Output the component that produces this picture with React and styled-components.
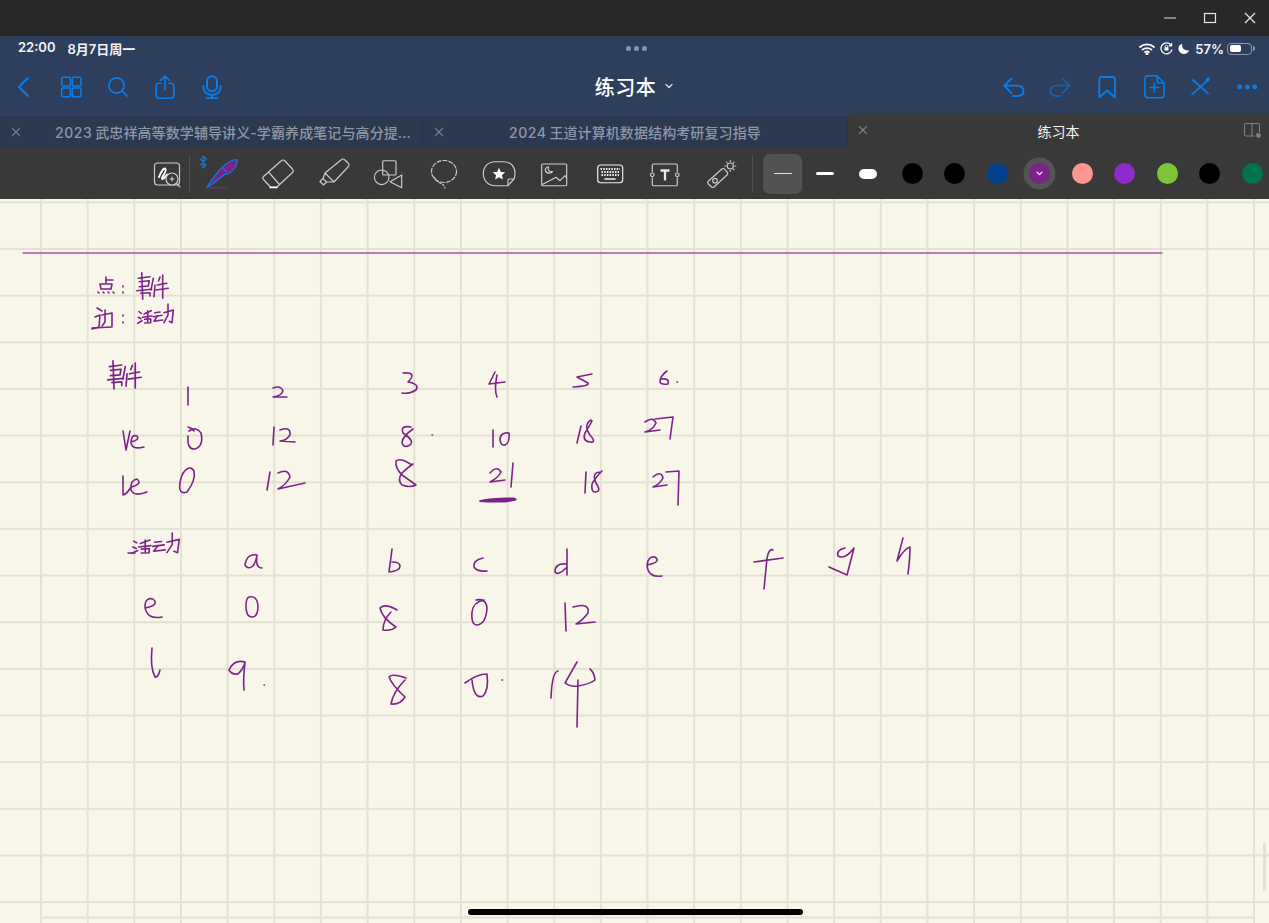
import styled, { createGlobalStyle } from 'styled-components';

const GlobalStyle = createGlobalStyle`
  html, body { margin: 0; padding: 0; background: #282828; }
  body { font-family: Inter, "Noto Sans CJK SC", sans-serif; overflow: hidden; }
`;

const blue = '#0a7ee8';
const ink = '#7c2389';

const Page = styled.div`
  width: 1269px;
  height: 923px;
  display: flex;
  flex-direction: column;
  overflow: hidden;
`;

const WindowBar = styled.div`
  height: 36px;
  flex: none;
  background: #282828;
  display: flex;
  justify-content: flex-end;
  align-items: center;
  margin-right: -1px;
`;

const WindowBtn = styled.button`
  width: 40px;
  height: 36px;
  padding: 0;
  border: 0;
  background: none;
  display: flex;
  align-items: center;
  justify-content: center;
`;

const Header = styled.header`
  flex: none;
  background: #2e3f5d;
  padding-bottom: 2px;
`;

const StatusBar = styled.div`
  height: 24px;
  box-sizing: border-box;
  padding: 1px 14px 0 18px;
  display: grid;
  grid-template-columns: 1fr auto 1fr;
  align-items: center;
  color: #f2f4f8;
  font-size: 13px;
  font-weight: 600;
`;

const Clock = styled.div`
  display: flex;
  gap: 12px;
`;

const Dots = styled.div`
  display: flex;
  gap: 3px;
  span {
    width: 5px;
    height: 5px;
    border-radius: 50%;
    background: #8595b3;
  }
`;

const Status = styled.div`
  display: flex;
  justify-content: flex-end;
  align-items: center;
  gap: 5px;
`;

const Battery = styled.div`
  width: 25px;
  height: 12px;
  box-sizing: border-box;
  border: 1px solid #8b97ac;
  border-radius: 4px;
  padding: 1.5px;
  margin-right: 3px;
  margin-left: -2px;
  position: relative;
  &::before {
    content: '';
    display: block;
    height: 100%;
    width: 56%;
    border-radius: 2px;
    background: #fff;
  }
  &::after {
    content: '';
    position: absolute;
    right: -4px;
    top: 2.5px;
    width: 2px;
    height: 5px;
    border-radius: 0 2px 2px 0;
    background: #8b97ac;
  }
`;

const NavBar = styled.nav`
  height: 54px;
  display: grid;
  grid-template-columns: 1fr auto 1fr;
  align-items: center;
`;

const NavGroup = styled.div`
  display: flex;
  justify-content: ${(p) => (p.$end ? 'flex-end' : 'flex-start')};
  margin-right: ${(p) => (p.$end ? -1 : 0)}px;
`;

const NavBtn = styled.button`
  width: ${(p) => p.$w || 47}px;
  height: 44px;
  padding: 0;
  border: 0;
  background: none;
  display: flex;
  align-items: center;
  justify-content: center;
`;

const NavSvg = styled.svg.attrs({
  width: 24,
  height: 24,
  viewBox: '0 0 24 24',
  fill: 'none',
  strokeLinecap: 'round',
  strokeLinejoin: 'round',
})`
  stroke: ${blue};
  stroke-width: ${(p) => p.$sw || 1.8};
  opacity: ${(p) => (p.$dim ? 0.5 : 1)};
`;

const Title = styled.div`
  display: flex;
  align-items: center;
  gap: 9px;
  color: #fff;
  font-size: 20px;
  font-weight: 500;
  letter-spacing: 0.5px;
  margin: -2px 1px 0 0;
`;

const TabRow = styled.div`
  height: 32px;
  flex: none;
  display: flex;
  background: #2a3950;
`;

const Tab = styled.div`
  width: ${(p) => p.$w}px;
  flex: none;
  box-sizing: border-box;
  height: ${(p) => (p.$active ? 35 : 32)}px;
  margin-top: ${(p) => (p.$active ? -3 : 0)}px;
  padding: 0 13px 0 ${(p) => p.$pad || 13}px;
  display: flex;
  align-items: center;
  justify-content: center;
  position: relative;
  border-right: ${(p) => (p.$active ? 0 : '1px solid #26344a')};
  border-radius: ${(p) => (p.$active ? '5px 0 0 0' : 0)};
  background: ${(p) => (p.$active ? '#393939' : 'transparent')};
  color: ${(p) => (p.$active ? '#f4f4f4' : '#8e97a6')};
  font-size: 14px;
  font-weight: ${(p) => (p.$active ? 400 : 500)};
  letter-spacing: ${(p) => (p.$active ? 0 : 0.1)}px;
  white-space: nowrap;
`;

const TabNum = styled.span`
  letter-spacing: 0.5px;
  margin-right: 3px;
`;

const TabClose = styled.svg.attrs({ width: 10, height: 10, viewBox: '0 0 10 10' })`
  position: absolute;
  left: ${(p) => (p.$active ? 10 : 11)}px;
  top: ${(p) => (p.$active ? 12 : 11)}px;
  stroke: ${(p) => (p.$active ? '#8a8a8a' : '#7f8998')};
  stroke-width: 1.1;
  fill: none;
`;

const SplitIcon = styled.svg.attrs({ width: 18, height: 16, viewBox: '0 0 18 16' })`
  position: absolute;
  right: 7px;
  top: 10px;
  fill: none;
  stroke: #818181;
  stroke-width: 1.1;
`;

const Toolbar = styled.div`
  height: 51px;
  flex: none;
  background: #393939;
  display: flex;
  align-items: center;
  padding-left: 147px;
  overflow: hidden;
`;

const ToolBtn = styled.button`
  width: ${(p) => p.$w || 55.4}px;
  height: 44px;
  flex: none;
  padding: 0;
  margin-right: ${(p) => p.$mr || 0}px;
  border: 0;
  background: none;
  display: flex;
  align-items: center;
  justify-content: center;
`;

const ToolSvg = styled.svg.attrs({
  width: 44,
  height: 44,
  viewBox: '0 0 44 44',
  fill: 'none',
  strokeLinecap: 'round',
  strokeLinejoin: 'round',
})`
  flex: none;
  stroke: #cdcdcd;
  stroke-width: 1.15;
`;

const ToolDivider = styled.div`
  width: 1px;
  height: 38px;
  flex: none;
  background: #4f4f4f;
  margin: ${(p) => p.$m};
`;

const WidthBtn = styled.div`
  width: 42.5px;
  height: 40px;
  flex: none;
  display: flex;
  align-items: center;
  justify-content: center;
  position: relative;
  &::before {
    content: '';
    position: absolute;
    left: 1.75px;
    right: 1.75px;
    top: 0;
    bottom: 0;
    border-radius: 7px;
    background: ${(p) => (p.$active ? '#525252' : 'transparent')};
  }
  &::after {
    content: '';
    position: relative;
    width: 18px;
    height: ${(p) => p.$h}px;
    border-radius: 5px;
    background: ${(p) => (p.$active ? '#e4e4e4' : '#fff')};
  }
`;

const SwatchRow = styled.div`
  display: flex;
  flex: none;
  margin-left: 2px;
`;

const Swatch = styled.div`
  width: 42.5px;
  height: 40px;
  flex: none;
  display: flex;
  align-items: center;
  justify-content: center;
`;

const Dot = styled.div`
  width: 21px;
  height: 21px;
  border-radius: 50%;
  flex: none;
  background: ${(p) => p.$color};
  display: flex;
  align-items: center;
  justify-content: center;
  box-shadow: ${(p) => (p.$active ? '0 0 0 5.5px #555' : 'none')};
`;

const Sheet = styled.main`
  flex: 1;
  position: relative;
  background-color: #f8f6e9;
  background-image:
    linear-gradient(to right, #e3e1d4 1.6px, transparent 1.6px),
    linear-gradient(to bottom, #e3e1d4 1.7px, transparent 1.7px);
  background-size: 46.667px 46.667px;
  background-position: 40px 2.3px;
`;

const InkLayer = styled.svg.attrs({
  viewBox: '0 199 1269 724',
  width: 1269,
  height: 724,
  fill: 'none',
  strokeLinecap: 'round',
  strokeLinejoin: 'round',
})`
  position: absolute;
  inset: 0;
  stroke: ${ink};
  stroke-width: 1.6;
`;

const HScroll = styled.div`
  position: absolute;
  left: 40px;
  width: 1213px;
  bottom: 4px;
  height: 3px;
  background: #e3e1d6;
  opacity: 0.8;
`;

const VScroll = styled.div`
  position: absolute;
  right: 3px;
  top: 644px;
  width: 3px;
  height: 48px;
  background: #e3e1d6;
`;

const HomeBar = styled.div`
  position: absolute;
  left: 468px;
  bottom: 8px;
  width: 335px;
  height: 6px;
  border-radius: 3px;
  background: #000;
`;

const shijian = [
  'M141.7 272.7 L142.7 299.3', 'M138.3 278.3 L150 276.7', 'M139.3 281.7 L149.3 280.7 L148.3 286 L139.3 286.7',
  'M136.7 290.7 L151.7 289.3', 'M140.7 293.3 L150 292.7 L150 296',
  'M153.3 278.3 L151 290', 'M155 285 L154 296.7', 'M157.3 285 L166.7 283.3', 'M156 290 L168.3 288.3',
  'M162.7 275 L162.7 298.3', 'M158.5 281 L160 277',
];

const huodong = [
  'M139 311.7 l2.3 1.6', 'M138.3 317.3 l2.7 1.4', 'M137.7 323.3 l4.3 -2.6', 'M144 314 L151.3 310.7', 'M147.7 310.7 V322',
  'M142.7 317.3 L152 316', 'M144.7 319.3 L150.7 318.7 V322.7 L144.7 323',
  'M154.7 312.7 L160 312', 'M153.3 316.7 L162 315.3', 'M157.3 316 L154 321.3 L162.7 320',
  'M164 312.7 L173.3 310 L172 322.7 L169.3 321.3', 'M168 304 V315 L164 322.7',
];

const inkPaths = [
  // heading labels
  'M106 277 V283', 'M106 280 H113', 'M100 284 H112 L111 289 H101 Z', 'M98 292 l1 1', 'M103 292 l1 1', 'M108 292 l1 1', 'M113 292 l1 1',
  'M123 286 v1', 'M123 292 v1',
  'M97 308 L102 311', 'M95 317 L100 315 L99 327 L92 329', 'M92 328 L112 327', 'M102 315 L112 313 L112 326', 'M105 310 L105 322 L102 326',
  'M123 315 v1', 'M123 322 v1',
  // first table
  'M188 387 L188 405',
  'M273 388 Q281 385 283 391 Q281 396 273 397 L287 397',
  'M403 373 Q418 372 408 382 Q420 384 416 390 Q410 394 402 393',
  'M495 372 L489 384 L505 382 M497 375 Q494 390 497 397',
  'M592 374 L577 377 L588 383 Q590 386 573 387',
  'M667 371 Q660 376 660 382 Q661 385 668 384 Q670 378 661 379', 'M677 382 h.5',
  'M123 431 L126 450 L130 431', 'M131 442 Q140 440 137 436 Q131 434 131 443 Q132 450 144 447',
  'M188 427 Q192 428 194 431 M189 431 Q196 426 201 433 Q204 446 195 449 Q187 450 188 436',
  'M274 427 L273 445', 'M280 430 Q291 426 290 435 Q286 441 280 441 L295 442',
  'M411 427 Q400 425 403 433 Q415 441 410 445 Q403 449 402 442 Q403 436 413 429', 'M432 435 h.5',
  'M493 430 L493 447', 'M509 433 Q500 432 500 440 Q501 446 505 445 Q510 443 509 433',
  'M581 426 L577 443', 'M591 420 Q583 425 590 435 Q597 443 590 442 Q582 441 585 433 Q590 425 592 421',
  'M645 422 Q653 416 656 423 Q653 430 645 432 L660 430', 'M655 419 L673 417 L670 439',
  'M123 476 L123 495 Q127 494 131 487', 'M131 487 Q143 484 137 479 Q130 480 131 490 Q134 497 147 492',
  'M183 473 Q190 464 194 471 Q196 480 187 492 Q178 495 180 483 Q181 476 184 472',
  'M270 472 L267 490', 'M278 473 Q288 468 290 477 Q286 485 278 489 L305 483',
  'M412 465 Q400 457 396 461 Q395 468 402 475 Q412 482 416 485 Q410 488 402 485 Q397 480 402 473 Q407 468 413 464',
  'M490 473 Q497 465 501 472 Q498 478 490 482 L505 480', 'M513 463 L511 487',
  'M586 472 L585 493', 'M601 472 Q591 472 596 483 Q602 492 595 492 Q591 492 592 484 Q595 478 602 471',
  'M653 477 Q661 470 663 478 Q660 484 653 487 L667 485', 'M666 472 L679 471 L678 505',
  // second table
  'M128 553 h7',
  'M257 555 Q247 553 245 565 Q248 570 253 566 Q256 562 257 555 Q255 568 262 568',
  'M392 549 L389 572 Q400 571 400 566 Q400 562 392 562',
  'M483 558 Q473 560 474 567 Q477 572 487 571',
  'M566 564 Q555 563 555 572 Q558 576 566 568 M567 549 L567 575',
  'M647 565 Q662 562 655 557 Q648 556 647 565 Q648 578 662 576',
  'M773 550 Q769 548 767 558 L764 589 M754 562 L783 558',
  'M845 548 Q836 550 838 556 Q845 560 854 548 L847 575 L829 567',
  'M903 538 L897 561 Q905 548 910 547 Q910 558 908 574',
  'M145 608 Q160 605 153 599 Q145 597 145 607 Q147 620 162 617',
  'M249 597 Q257 595 258 606 Q258 617 252 617 Q246 617 246 606 Q246 598 249 597',
  'M397 610 Q385 603 380 608 Q382 618 396 627 Q392 631 383 630 Q383 620 391 612',
  'M476 600 Q486 598 487 608 Q486 624 477 625 Q471 625 472 612 Q473 602 484 600',
  'M565 603 L566 631', 'M573 607 Q590 602 588 613 Q582 621 576 624 L595 622',
  'M152 648 Q150 668 155 677 Q158 678 160 670',
  'M245 662 Q234 659 229 670 Q232 675 238 674 Q244 668 245 662 Q243 680 244 690', 'M264 685 h.5',
  'M406 678 Q392 673 389 677 Q392 685 405 697 Q400 705 391 704 Q393 692 405 680',
  'M465 683 Q477 674 487 674 Q489 690 483 696 Q474 700 472 680', 'M502 680 h.5',
  'M558 671 Q552 672 551 698', 'M577 662 L565 683 Q570 687 578 686 Q590 684 595 680 Q594 672 590 669', 'M578 680 L577 727',
];

const Ink = () => (
  <InkLayer aria-hidden="true">
    <path d="M23 253 H1162" stroke="#a94fa9" strokeWidth="1.3" />
    {shijian.map((d) => <path key={d} d={d} />)}
    <g transform="translate(108 360) scale(1.06) translate(-137 -272)">
      {shijian.map((d) => <path key={d} d={d} />)}
    </g>
    {huodong.map((d) => <path key={d} d={d} />)}
    <g transform="translate(131 532) scale(1.33 1.05) translate(-137 -303)">
      {huodong.map((d) => <path key={d} d={d} vectorEffect="non-scaling-stroke" />)}
    </g>
    {inkPaths.map((d) => <path key={d} d={d} />)}
    <path d="M480 501 Q492 498 514 498.5 Q520 500 505 501.5 Q490 502 480 501 Z" fill={ink} strokeWidth="1.8" />
  </InkLayer>
);

const tools = [
  {
    key: 'pen', mr: 4.3,
    el: (
      <>
        <path d="M4.5 7 L10 13 L7 16 V4 L10 7 L4.5 13" stroke={blue} />
        <path d="M10.7 35.7 C15 28 21 21 26 15.5 C30 11.5 35 8.500 40 7.500 C42 7.500 41.500 11 39.500 14.500 C36.500 19.500 32.500 22.500 28.500 22.500 C22 28 16 32.500 10.700 35.700 Z" fill={ink} stroke={blue} />
        <path d="M27 16 L30.500 20" stroke={blue} />
        <path d="M14 35.800 H30" stroke={ink} strokeWidth="1.500" />
      </>
    ),
  },
  {
    key: 'eraser',
    el: (
      <>
        <path d="M26 9 Q28 7 30 9 L37.500 17 Q39 19 37.500 20.500 L22 35 H15.500 L8.500 27.500 Q7 26 8.500 24.500 Z M13.500 20 L24 32" />
        <path d="M15 35.500 H22" stroke="#fff" strokeWidth="1.500" />
      </>
    ),
  },
  {
    key: 'marker',
    el: <path d="M30 8 Q32 6 34 8 L37 11 Q39 13 37 15 L23 30 L14 21 Z M14 21 L12 26.500 L9 29.500 L12.500 33 L15.500 30 L23 30 M12 26.500 L15.500 30" />,
  },
  {
    key: 'shapes',
    el: (
      <>
        <rect x="16.700" y="8.700" width="13.300" height="14.300" rx="1" />
        <circle cx="15.700" cy="25.300" r="7.300" />
        <path d="M35.700 23 V35.700 L24 29.700 Z" />
      </>
    ),
  },
  {
    key: 'lasso',
    el: (
      <>
        <ellipse cx="22" cy="19.500" rx="12.500" ry="11" strokeDasharray="4 2" />
        <path d="M12 25 Q15 30 20 32 Q22 33 23 36" strokeDasharray="2 1.800" />
      </>
    ),
  },
  {
    key: 'sticker',
    el: (
      <>
        <path d="M18 9.700 H27 C34 9.700 38 15 38 21 C38 24 37.500 26 37 27 L31 33.700 H18 C11 33.700 6.300 28 6.300 21.700 C6.300 15 11 9.700 18 9.700 Z M37 27 H32 Q31 27 31 28 V33.700" />
        <path d="M22 15.800 L23.800 19.900 L28.200 20.300 L24.900 23.200 L25.900 27.500 L22 25.300 L18.100 27.500 L19.100 23.200 L15.800 20.300 L20.200 19.900 Z" fill="#fff" stroke="none" />
      </>
    ),
  },
  {
    key: 'image',
    el: (
      <>
        <rect x="9.700" y="12" width="25" height="21.700" rx="1" />
        <path d="M16.500 14.800 C15.500 17.800 17 20.300 20.600 19.500 C19.500 21.800 14.300 22 13.300 18.500 C13 16.800 14.500 15 16.500 14.800 Z" />
        <path d="M10.700 32.300 L18 28.500 L24 25.300 L28 28.700 L33 23.700 L34.700 26" />
      </>
    ),
  },
  {
    key: 'keyboard',
    el: (
      <g stroke="#f2f2f2">
        <rect x="9.700" y="13" width="25" height="17.700" rx="3" />
        <path d="M12.500 17 H32 M13.500 20 H31 M13.500 23 H31" strokeWidth="1.800" strokeDasharray="1.500 1.200" strokeLinecap="butt" />
        <path d="M17 27 H27" strokeWidth="1.500" />
      </g>
    ),
  },
  {
    key: 'text',
    el: (
      <>
        <path d="M9.300 19.800 V13 Q9.300 12 10.300 12 H33.300 Q34.300 12 34.300 13 V19.800 M9.300 25.800 V32.700 Q9.300 33.700 10.300 33.700 H33.300 Q34.300 33.700 34.300 32.700 V25.800" />
        <circle cx="9.300" cy="22.800" r="1.800" />
        <circle cx="34.300" cy="22.800" r="1.800" />
        <path d="M17.500 18.500 H26.500 M22 18.500 V28.500" stroke="#e8e8e8" strokeWidth="2.300" strokeLinecap="butt" />
      </>
    ),
  },
  {
    key: 'laser',
    el: (
      <>
        <path d="M9.200 29.200 L23.200 16.800 Q24.500 16 25.500 17.200 L28.500 20.500 Q29.200 21.800 28 23 L15 35 Q13.700 36 12.500 35 L9 31.500 Q8.200 30.300 9.200 29.200 Z" />
        <circle cx="16" cy="28.700" r="2.300" />
        <circle cx="31.300" cy="14" r="3" />
        <path d="M31.300 8.500 V9.500 M31.300 18.500 V19.500 M25.800 14 H26.800 M35.800 14 H36.800 M27.500 10.200 L28.200 10.900 M34.400 17.100 L35.100 17.800 M35.100 10.200 L34.400 10.900" />
      </>
    ),
  },
];

const colors = ['#000000', '#000000', '#00408c', '#7c2389', '#ff9491', '#8d2bca', '#7dc537', '#000000', '#00734f'];

const Wifi = () => (
  <svg width="16" height="12" viewBox="0 0 16 12" fill="none" stroke="#fff" strokeWidth="1.700" strokeLinecap="round">
    <path d="M1 4 C5 .4 11 .4 15 4" />
    <path d="M3.500 6.600 C6 4.600 10 4.600 12.500 6.600" />
    <path d="M6 9 C7.200 8.200 8.800 8.200 10 9" />
    <circle cx="8" cy="10.800" r=".7" fill="#fff" />
  </svg>
);

const RotationLock = () => (
  <svg width="13" height="13" viewBox="0 0 13 13" fill="none" stroke="#fff" strokeWidth="1.300" strokeLinecap="round">
    <path d="M11.800 7.800 A5.500 5.500 0 1 1 11 3.300" />
    <path d="M11.500 1.500 V3.800 H9.300" />
    <rect x="4.500" y="5.300" width="4" height="3.200" rx=".5" fill="#fff" stroke="none" />
    <path d="M5.300 5.300 V4.500 A1.200 1.200 0 0 1 7.700 4.500 V5.300" strokeWidth=".9" />
  </svg>
);

const Moon = () => (
  <svg width="12" height="12" viewBox="0 0 12 12">
    <path d="M4.300 .8 C3.200 4.800 6.500 8.300 11.300 7.300 C10.200 10.300 7 11.700 4.200 10.800 C.8 9.500 -.5 5.900 1 3.200 C1.700 2 2.900 1.200 4.300 .8 Z" fill="#fff" />
  </svg>
);

const Close = ({ $active }) => (
  <TabClose $active={$active}>
    <path d="M1.200 1.200 L8.800 8.800 M8.800 1.200 L1.200 8.800" />
  </TabClose>
);

const App = () => {
  return (
    <Page>
      <GlobalStyle />
      <WindowBar>
        <WindowBtn>
          <svg width="14" height="2" viewBox="0 0 14 2"><path d="M1 1 H13" stroke="#b5b5b5" strokeWidth="1.300" /></svg>
        </WindowBtn>
        <WindowBtn>
          <svg width="14" height="12" viewBox="0 0 14 12"><rect x="1.500" y="1.500" width="11" height="9" fill="none" stroke="#e8e8e8" strokeWidth="1.200" /></svg>
        </WindowBtn>
        <WindowBtn>
          <svg width="12" height="12" viewBox="0 0 12 12"><path d="M1 1 L11 11 M11 1 L1 11" stroke="#e8e8e8" strokeWidth="1.200" /></svg>
        </WindowBtn>
      </WindowBar>

      <Header>
        <StatusBar>
          <Clock>
            <span>22:00</span>
            <span>8月7日周一</span>
          </Clock>
          <Dots><span /><span /><span /></Dots>
          <Status>
            <Wifi />
            <RotationLock />
            <Moon />
            <span>57%</span>
            <Battery />
          </Status>
        </StatusBar>
        <NavBar>
          <NavGroup>
            <NavBtn>
              <NavSvg $sw={2.1}><path d="M15.800 3.300 L6.800 11.700 L15.800 20.700" /></NavSvg>
            </NavBtn>
            <NavBtn>
              <NavSvg $sw={1.500}>
                <rect x="2.700" y="2.300" width="8.700" height="8.700" rx="1.200" />
                <rect x="13.300" y="2.300" width="8.700" height="8.700" rx="1.200" />
                <rect x="2.700" y="13" width="8.700" height="8.700" rx="1.200" />
                <rect x="13.300" y="13" width="8.700" height="8.700" rx="1.200" />
              </NavSvg>
            </NavBtn>
            <NavBtn>
              <NavSvg $sw={1.700}><circle cx="10.500" cy="10.500" r="7.600" /><path d="M16 16 L21 21" /></NavSvg>
            </NavBtn>
            <NavBtn>
              <NavSvg $sw={1.600}>
                <path d="M8 8.300 H6 Q3.200 8.300 3.200 11 V20.500 Q3.200 23.300 6 23.300 H18 Q20.800 23.300 20.800 20.500 V11 Q20.800 8.300 18 8.300 H16" />
                <path d="M12 1 V15 M7.500 5.500 L12 1 L16.500 5.500" />
              </NavSvg>
            </NavBtn>
            <NavBtn>
              <NavSvg $sw={2}>
                <rect x="7" y="1.200" width="10" height="15" rx="5" />
                <path d="M3.300 11 V12 C3.300 17 7 20 12 20 C17 20 20.700 17 20.700 12 V11 M12 20 V23 M6.500 23.200 H17.500" />
              </NavSvg>
            </NavBtn>
          </NavGroup>
          <Title>
            练习本
            <svg width="8" height="6" viewBox="0 0 8 6" fill="none" stroke="#d8dde6" strokeWidth="1.300" strokeLinecap="round" strokeLinejoin="round">
              <path d="M1 1.500 L4 4.500 L7 1.500" />
            </svg>
          </Title>
          <NavGroup $end>
            <NavBtn $w={46.6}>
              <NavSvg><path d="M9.700 3.300 L2.300 10.700 L9.700 18.300 M2.300 10.700 H14 C19 10.700 21.500 13 21.500 16 C21.500 19 19 21 15 21 H11" /></NavSvg>
            </NavBtn>
            <NavBtn $w={46.6}>
              <NavSvg $dim><path d="M14.300 3.300 L21.700 10.700 L14.300 18.300 M21.700 10.700 H10 C5 10.700 2.500 13 2.500 16 C2.500 19 5 21 9 21 H13" /></NavSvg>
            </NavBtn>
            <NavBtn $w={46.6}>
              <NavSvg><path d="M4.300 4.500 Q4.300 2 6.500 2 H17.800 Q20 2 20 4.500 V22.500 L12.100 15.500 L4.300 22.500 Z" /></NavSvg>
            </NavBtn>
            <NavBtn $w={46.6}>
              <NavSvg $sw={1.500}>
                <path d="M6 .8 H15 L22 8 V20 Q22 22.700 19 22.700 H6 Q3 22.700 3 20 V3.800 Q3 .8 6 .8 Z M15 .8 V6 Q15 8 17 8 H22" />
                <path d="M12.300 8.300 V16.700 M8.100 12.500 H16.500" strokeWidth="1.700" />
              </NavSvg>
            </NavBtn>
            <NavBtn $w={46.6}>
              <NavSvg>
                <path d="M4.200 19.300 L20 5" />
                <path d="M5 5 L20 18.300" />
                <path d="M18.500 4.500 L20.500 3 L21.200 3.800 L19.800 5.800 Z" fill={blue} />
              </NavSvg>
            </NavBtn>
            <NavBtn $w={46.6}>
              <svg width="24" height="8" viewBox="0 0 24 8" fill={blue}>
                <circle cx="4.700" cy="4" r="2.400" />
                <circle cx="12.300" cy="4" r="2.400" />
                <circle cx="19.800" cy="4" r="2.400" />
              </svg>
            </NavBtn>
          </NavGroup>
        </NavBar>
      </Header>

      <TabRow>
        <Tab $w={423} $pad={57}>
          <Close />
          <TabNum>2023</TabNum>武忠祥高等数学辅导讲义-学霸养成笔记与高分提...
        </Tab>
        <Tab $w={425}>
          <Close />
          <TabNum>2024</TabNum>王道计算机数据结构考研复习指导
        </Tab>
        <Tab $w={421} $active>
          <Close $active />
          练习本
          <SplitIcon>
            <rect x=".5" y=".5" width="15" height="12.500" rx="1.500" />
            <path d="M8 .5 V13" />
            <circle cx="14.500" cy="12.500" r="3" fill="#818181" stroke="#393939" />
          </SplitIcon>
        </Tab>
      </TabRow>

      <Toolbar>
        <ToolBtn $w={40}>
          <ToolSvg>
            <rect x="9.500" y="11" width="25" height="22" rx="3" />
            <path d="M14 25 C16 20 19 15 20.500 17 C22 20 15 27 17.500 27 C20 27 21 22 23 22.500" stroke="#fff" strokeWidth="1.900" />
            <circle cx="27" cy="27" r="6" fill="#393939" />
            <path d="M25 27 h4 M27 25 v4 M31.500 31.500 L35 35" />
          </ToolSvg>
        </ToolBtn>
        <ToolDivider $m="0 0 0 2px" />
        {tools.map((t) => (
          <ToolBtn key={t.key} $mr={t.mr}>
            <ToolSvg>{t.el}</ToolSvg>
          </ToolBtn>
        ))}
        <ToolDivider $m="0 8.5px 0 4px" />
        <WidthBtn $active $h={1.5} />
        <WidthBtn $h={2.5} />
        <WidthBtn $h={10} />
        <SwatchRow>
          {colors.map((c, i) => (
            <Swatch key={i}>
              <Dot $color={c} $active={i === 3}>
                {i === 3 && (
                  <svg width="7" height="5" viewBox="0 0 7 5" fill="none" stroke="#fff" strokeWidth="1.200" strokeLinecap="round" strokeLinejoin="round">
                    <path d="M1 1.200 L3.500 3.700 L6 1.200" />
                  </svg>
                )}
              </Dot>
            </Swatch>
          ))}
        </SwatchRow>
      </Toolbar>

      <Sheet>
        <Ink />
        <HScroll />
        <VScroll />
        <HomeBar />
      </Sheet>
    </Page>
  );
};

export default App;
